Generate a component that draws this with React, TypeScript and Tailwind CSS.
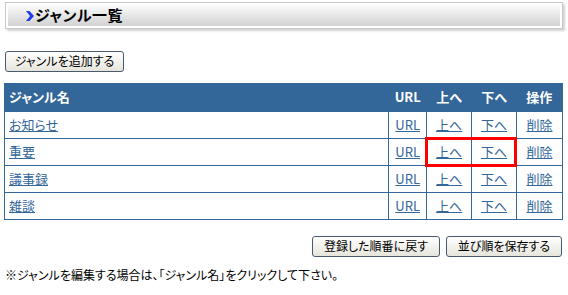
import React from 'react';

const font = "font-['MS_PGothic','Noto_Sans_CJK_JP',sans-serif] [font-feature-settings:'palt']";

const genres = ['お知らせ', '重要', '議事録', '雑談'];

function XpButton({ children, className = '' }: { children: React.ReactNode; className?: string }) {
  return (
    <button
      className={`h-[21px] rounded-[3px] border border-[#4a5a6e] bg-gradient-to-b from-white to-[#e6e5dc] px-2 text-[12px] leading-none text-black ${className}`}
    >
      {children}
    </button>
  );
}

export default function App() {
  return (
    <div className={`w-[568px] h-[295px] bg-white pl-[4px] pt-[2px] text-black ${font}`}>
      {/* 見出し */}
      <div className="ml-[1px] w-[558px] h-[27px] border border-[#c9c9c9] shadow-[2px_2px_2px_rgba(0,0,0,0.18)]">
        <div className="h-full border-2 border-white bg-gradient-to-b from-[#fbfbfb] to-[#d2d2d2] flex items-center pl-[18px]">
          <svg width="8" height="10" viewBox="0 0 8 10" className="mr-[1px]">
            <polygon points="0,0 3.5,0 8,5 3.5,10 0,10 4,5" fill="#1f3df0" />
          </svg>
          <span className="text-[15px] font-bold tracking-[0.5px]">ジャンル一覧</span>
        </div>
      </div>

      <div className="mt-[18px] ml-[1px]">
        <XpButton className="w-[119px]">ジャンルを追加する</XpButton>
      </div>

      <table className="mt-[11px] w-[559px] border-collapse border border-[#336699] text-[13px]">
        <colgroup>
          <col className="w-[385px]" />
          <col className="w-[38px]" />
          <col className="w-[45px]" />
          <col className="w-[45px]" />
          <col className="w-[46px]" />
        </colgroup>
        <thead>
          <tr className="h-[28px] bg-[#336699] text-white font-bold">
            <th className="text-left pl-[4px] font-bold">ジャンル名</th>
            <th className="font-bold">URL</th>
            <th className="font-bold">上へ</th>
            <th className="font-bold">下へ</th>
            <th className="font-bold">操作</th>
          </tr>
        </thead>
        <tbody>
          {genres.map((g, i) => (
            <tr key={g} className="h-[27px]">
              <td className="border border-[#336699] pl-[4px]">
                <a href="#" className="text-[#336699] underline">{g}</a>
              </td>
              <td className="border border-[#336699] text-center">
                <a href="#" className="text-[#336699] underline">URL</a>
              </td>
              <td className="border border-[#336699] text-center relative">
                <a href="#" className="text-[#336699] underline">上へ</a>
                {i === 1 && (
                  <div className="absolute left-[-2px] top-[-2px] w-[92px] h-[30px] border-[3px] border-[#ff0000] pointer-events-none" />
                )}
              </td>
              <td className="border border-[#336699] text-center">
                <a href="#" className="text-[#336699] underline">下へ</a>
              </td>
              <td className="border border-[#336699] text-center">
                <a href="#" className="text-[#336699] underline">削除</a>
              </td>
            </tr>
          ))}
        </tbody>
      </table>

      <div className="mt-[16px] w-[558px] flex justify-end gap-[6px]">
        <XpButton className="w-[128px]">登録した順番に戻す</XpButton>
        <XpButton className="w-[116px]">並び順を保存する</XpButton>
      </div>

      <p className="mt-[9px] ml-[1px] text-[12px]">
        ※ジャンルを編集する場合は、「ジャンル名」をクリックして下さい。
      </p>
    </div>
  );
}
